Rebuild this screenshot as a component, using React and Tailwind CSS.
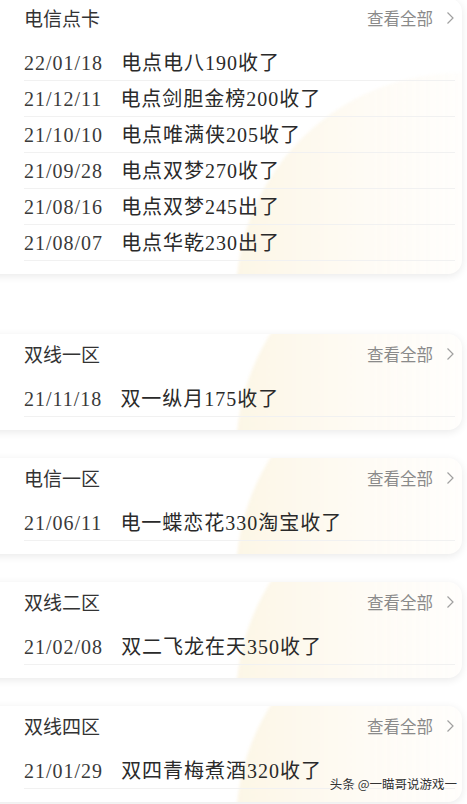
const groups = [
  {
    title: "电信点卡",
    first: true,
    rows: [
      ["22/01/18", "电点电八190收了"],
      ["21/12/11", "电点剑胆金榜200收了"],
      ["21/10/10", "电点唯满侠205收了"],
      ["21/09/28", "电点双梦270收了"],
      ["21/08/16", "电点双梦245出了"],
      ["21/08/07", "电点华乾230出了"],
    ],
  },
  { title: "双线一区", rows: [["21/11/18", "双一纵月175收了"]] },
  { title: "电信一区", rows: [["21/06/11", "电一蝶恋花330淘宝收了"]] },
  { title: "双线二区", rows: [["21/02/08", "双二飞龙在天350收了"]] },
  { title: "双线四区", rows: [["21/01/29", "双四青梅煮酒320收了"]] },
];

function Chevron() {
  return (
    <svg width="9" height="14" viewBox="0 0 9 14" fill="none" className="ml-[13px]">
      <path d="M1.5 1.5 L7 7 L1.5 12.5" stroke="#a0a0a0" strokeWidth="1.2" />
    </svg>
  );
}

function Card({ title, rows, first }) {
  return (
    <div
      className={`relative ml-[-12px] mr-[5px] overflow-hidden rounded-r-[14px] bg-white pt-[8px] pb-[13px] pl-[36px] pr-[7px] shadow-[0_2px_8px_rgba(0,0,0,0.09)] ${
        first ? "mt-[-2px]" : ""
      }`}
    >
      {/* faint cream arc in the background */}
      <div className="pointer-events-none absolute left-[248px] bottom-[-247px] h-[448px] w-[448px] rounded-full bg-linear-to-r from-[#fcf6e6] via-[#fefbf5] via-30% to-white/0 to-60% blur-[1.5px]" />
      <div className="relative flex h-[24px] items-center justify-between">
        <span className="text-[19px] text-[#333]">{title}</span>
        <span className="flex items-center text-[16.5px] text-[#8a8a8a]">
          查看全部
          <Chevron />
        </span>
      </div>
      <div className="relative mt-[15px]">
        {rows.map(([d, t]) => (
          <div
            key={d}
            className="flex h-[36px] items-center border-b border-[#f1f1f1] text-[20px] tracking-[1px] text-[#2a2a2a]"
            style={{ fontFamily: '"Liberation Serif", "Noto Sans CJK SC", serif' }}
          >
            <span className="text-[#3a3a3a]">{d}</span>
            <span className="ml-[18px]">{t}</span>
          </div>
        ))}
      </div>
    </div>
  );
}

export default function App() {
  return (
    <div
      className="relative flex h-[804px] w-[467px] flex-col overflow-hidden bg-white"
      style={{ fontFamily: '"Noto Sans CJK SC", "Noto Sans", sans-serif' }}
    >
      <Card {...groups[0]} />
      <div className="mt-[60px] flex flex-col gap-[28px]">
        {groups.slice(1).map((g) => (
          <Card key={g.title} {...g} />
        ))}
      </div>
      <div className="absolute right-[10px] bottom-[10px] text-[12.5px] text-[#333] [text-shadow:0_0_3px_#fff]">
        头条 @一瞄哥说游戏一
      </div>
    </div>
  );
}
